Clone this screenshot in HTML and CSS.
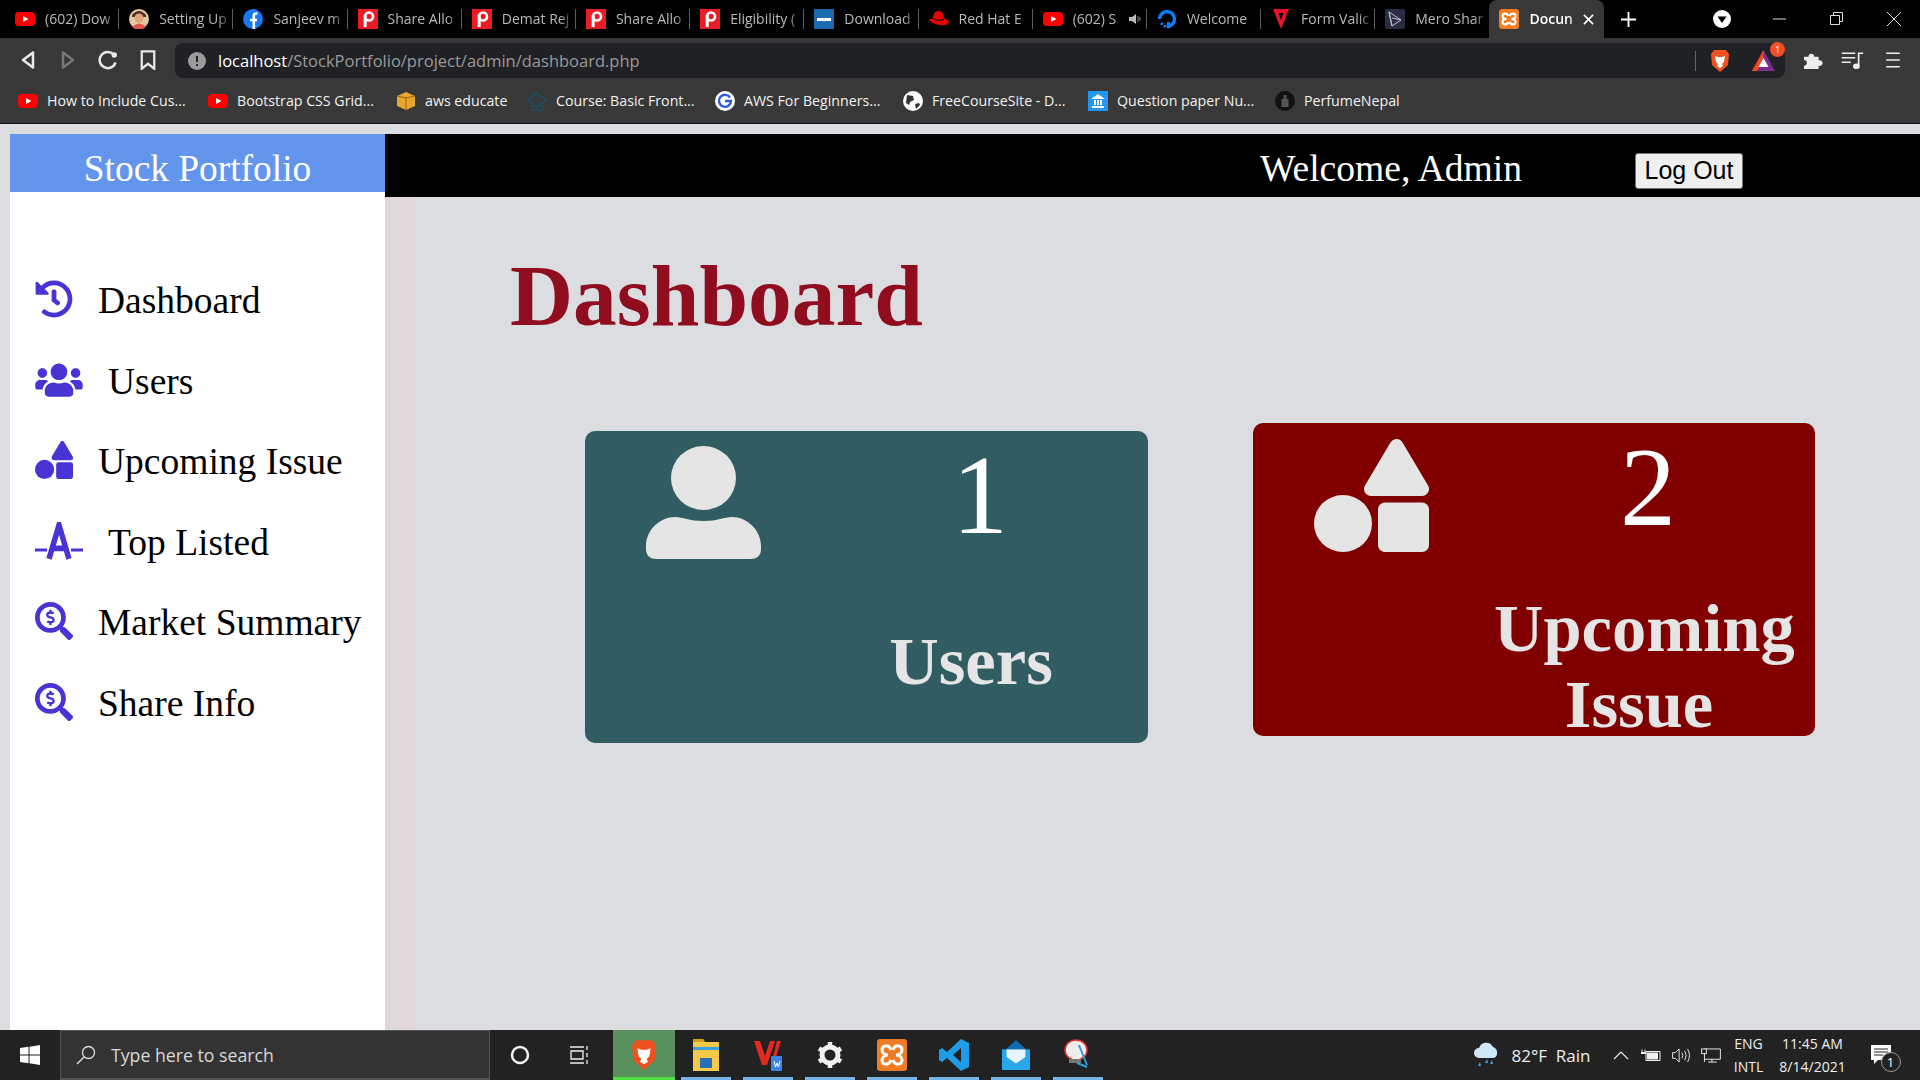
FILE: index.html
```html
<!DOCTYPE html>
<html lang="en">
<head>
<meta charset="utf-8">
<title>Document</title>
<link rel="stylesheet" href="styles.css">
</head>
<body>
<svg class="defs" aria-hidden="true">
  <defs>
    <symbol id="yt" viewBox="0 0 20 14"><rect width="20" height="14" rx="4" fill="#f00"/><path d="M8 4l5.5 3L8 10z" fill="#fff"/></symbol>
    <symbol id="pf" viewBox="0 0 20 20"><rect width="20" height="20" fill="#ed1c24"/><circle cx="11" cy="7.5" r="4" fill="none" stroke="#fff" stroke-width="2.6"/><path d="M7.2 6v12" stroke="#fff" stroke-width="3"/></symbol>
    <symbol id="fb" viewBox="0 0 20 20"><circle cx="10" cy="10" r="10" fill="#1877f2"/><path d="M7 11h7M14.5 4.500h-1.500c-1.500 0-2.200 1-2.200 2.500V20" fill="none" stroke="#fff" stroke-width="2.600"/></symbol>
    <symbol id="av" viewBox="0 0 20 20"><circle cx="10" cy="10" r="10" fill="#e9c8a0"/><path d="M3 6q7-8 14 0v2H3z" fill="#4a3326"/><circle cx="10" cy="9" r="4.500" fill="#e2a77c"/><path d="M3 18q7-7 14 0l-3 2H6z" fill="#e8554e"/></symbol>
    <symbol id="vm" viewBox="0 0 20 20"><rect width="20" height="20" fill="#1b6bb0"/><path d="M3 9h14v3H3z" fill="#fff"/></symbol>
    <symbol id="rh" viewBox="0 0 20 20"><path d="M6 3q3-2 7 0l2 6 5 3q0 5-9 4T0 10l3 0z" fill="#e00"/><path d="M3 9q6 4 12 1" stroke="#000" fill="none"/></symbol>
    <symbol id="do" viewBox="0 0 20 20"><path d="M10 17.500A7.500 7.500 0 1 0 2.500 10" fill="none" stroke="#0a7cff" stroke-width="3.500"/><path d="M10 13h3v3h-3zM6.500 16h3v2.500h-3zM3.500 13.500h2.500V16h-2.500z" fill="#0a7cff"/></symbol>
    <symbol id="fv" viewBox="0 0 20 20"><path d="M2 0h16l-8 20z" fill="#e8132b"/><path d="M7.500 4h5L10 11z" fill="#000"/></symbol>
    <symbol id="ms" viewBox="0 0 20 20"><rect width="20" height="20" rx="2" fill="#2a2c44"/><path d="M4 3l12 8-9 6zM4 3l3 14M7 9l9 2" fill="none" stroke="#bfc4d8" stroke-width="1"/></symbol>
    <symbol id="xa" viewBox="0 0 20 20"><rect width="20" height="20" rx="3" fill="#f47b20"/><path d="M9.500 7C8 3.500 3.500 4 3.500 7c0 2 2 3 4 3-2 0-4 1-4 3 0 3 4.500 3.500 6 0M10.500 7c1.500-3.500 6-3 6 0 0 2-2 3-4 3 2 0 4 1 4 3 0 3-4.500 3.500-6 0" fill="none" stroke="#fff" stroke-width="2.200"/></symbol>
    <symbol id="go" viewBox="0 0 20 20"><circle cx="10" cy="10" r="10" fill="#fff"/><path d="M15 6.500A6 6 0 1 0 16 10h-6" fill="none" stroke="#2a5bd7" stroke-width="2.400"/></symbol>
    <symbol id="gl" viewBox="0 0 20 20"><circle cx="10" cy="10" r="10" fill="#fff"/><path d="M4 4l6 1 1 4-4 2-1 3-3-2zM12 13l4-1 1 2-4 4z" fill="#333"/></symbol>
    <symbol id="bk" viewBox="0 0 20 20"><rect width="20" height="20" fill="#2196f3"/><path d="M3 8l7-5 7 5zM4 15h12v2H4zM6 9h2v5H6zM9 9h2v5H9zM12 9h2v5h-2z" fill="#fff"/></symbol>
    <symbol id="pn" viewBox="0 0 20 20"><circle cx="10" cy="10" r="10" fill="#111"/><rect x="6.500" y="8" width="7" height="8" fill="#555"/><rect x="8.500" y="4" width="3" height="4" fill="#555"/></symbol>
    <symbol id="aw" viewBox="0 0 20 20"><path d="M10 1l9 4v10l-9 4-9-4V5z" fill="#e9a52e"/><path d="M10 6v13M1 5l9 2 9-2" fill="none" stroke="#9a6a12" stroke-width="1"/></symbol>
    <symbol id="co" viewBox="0 0 20 20"><path d="M1 9l9-7 9 7-9 7zM5 14v5h10v-5" fill="none" stroke="#1f4d63" stroke-width="1.600"/></symbol>
    <symbol id="br" viewBox="0 0 20 24"><path d="M4 1h12l3 4-1 11-8 7-8-7L1 5z" fill="#f1511e"/><path d="M5 7l3 1h4l3-1-1 6-2 2 1 2-3 2-3-2 1-2-2-2z" fill="#fff"/></symbol>
    <symbol id="history" viewBox="0 0 512 512"><path d="M504 255.531c.253 136.64-111.18 248.372-247.82 248.468-59.015.042-113.223-20.53-155.822-54.911-11.077-8.94-11.905-25.541-1.839-35.607l11.267-11.267c8.609-8.609 22.353-9.551 31.891-1.984C173.062 425.135 212.781 440 256 440c101.705 0 184-82.311 184-184 0-101.705-82.311-184-184-184-48.814 0-93.149 18.969-126.068 49.932l50.754 50.754c10.08 10.08 2.941 27.314-11.313 27.314H24c-8.837 0-16-7.163-16-16V38.627c0-14.254 17.234-21.393 27.314-11.314l49.372 49.372C129.209 34.136 189.552 8 256 8c136.81 0 247.747 110.78 248 247.531zm-180.912 78.784l9.823-12.63c8.138-10.463 6.253-25.542-4.21-33.679L288 256.349V152c0-13.255-10.745-24-24-24h-16c-13.255 0-24 10.745-24 24v135.651l65.409 50.874c10.463 8.137 25.541 6.253 33.679-4.21z"/></symbol>
    <symbol id="users" viewBox="0 0 640 512"><path d="M96 224c35.3 0 64-28.7 64-64s-28.7-64-64-64-64 28.7-64 64 28.7 64 64 64zm448 0c35.3 0 64-28.7 64-64s-28.7-64-64-64-64 28.7-64 64 28.7 64 64 64zm32 32h-64c-17.6 0-33.5 7.1-45.1 18.6 40.3 22.1 68.9 62 75.1 109.4h66c17.7 0 32-14.3 32-32v-32c0-35.3-28.7-64-64-64zm-256 0c61.9 0 112-50.1 112-112S381.9 32 320 32 208 82.1 208 144s50.1 112 112 112zm76.8 32h-8.3c-20.8 10-43.9 16-68.5 16s-47.6-6-68.5-16h-8.3C179.6 288 128 339.6 128 403.2V432c0 26.5 21.5 48 48 48h288c26.5 0 48-21.5 48-48v-28.8c0-63.6-51.6-115.2-115.2-115.2zm-223.7-13.4C161.5 263.1 145.6 256 128 256H64c-35.3 0-64 28.7-64 64v32c0 17.7 14.3 32 32 32h65.9c6.3-47.4 34.9-87.3 75.2-109.4z"/></symbol>
    <symbol id="shapes" viewBox="0 0 115 113" preserveAspectRatio="none"><path d="M82.500 7L108 50H57z" stroke="currentColor" stroke-width="14" stroke-linejoin="round"/><ellipse cx="29" cy="84.500" rx="29" ry="28.500"/><rect x="64" y="63.500" width="51" height="49.500" rx="7"/></symbol>
    <symbol id="road" viewBox="0 0 48 36" preserveAspectRatio="none"><path d="M14 35L24 3l10 32M18 25h12" fill="none" stroke="currentColor" stroke-width="5.500"/><path d="M0 26.500h12M36 26.500h12" stroke="currentColor" stroke-width="3"/></symbol>
    <symbol id="dollar" viewBox="0 0 512 512"><path d="M505.04 442.66l-99.71-99.69c-4.5-4.5-10.6-7-17-7h-16.3c27.6-35.3 44-79.69 44-127.99C416.03 93.09 322.92 0 208.02 0S0 93.09 0 207.98s93.11 207.98 208.02 207.98c48.3 0 92.71-16.4 128.01-44v16.3c0 6.4 2.5 12.5 7 17l99.71 99.69c9.4 9.4 24.6 9.4 33.9 0l28.3-28.3c9.4-9.4 9.4-24.59.1-33.99zm-297.02-90.7c-79.54 0-144-64.34-144-143.98 0-79.53 64.35-143.98 144-143.98 79.54 0 144 64.34 144 143.98 0 79.53-64.35 143.98-144 143.98zm27.11-152.54l-45.01-13.5c-5.16-1.55-8.77-6.78-8.77-12.73 0-7.27 5.3-13.19 11.8-13.19h28.11c4.56 0 8.96 1.29 12.82 3.72 3.24 2.03 7.36 1.91 10.13-.73l11.75-11.21c3.53-3.37 3.33-9.21-.57-12.14-9.1-6.83-20.08-10.77-31.37-11.35V112c0-4.42-3.58-8-8-8h-16c-4.42 0-8 3.58-8 8v16.12c-23.63.63-42.68 20.55-42.68 45.07 0 19.97 12.99 37.81 31.58 43.39l45.01 13.5c5.16 1.55 8.77 6.78 8.77 12.73 0 7.27-5.3 13.19-11.8 13.19h-28.1c-4.56 0-8.96-1.29-12.82-3.72-3.24-2.03-7.36-1.91-10.13.73l-11.75 11.21c-3.53 3.37-3.33 9.21.57 12.14 9.1 6.83 20.08 10.77 31.37 11.35V304c0 4.42 3.58 8 8 8h16c4.42 0 8-3.58 8-8v-16.12c23.63-.63 42.68-20.54 42.68-45.07 0-19.97-12.98-37.81-31.58-43.39z"/></symbol>
  </defs>
</svg>

<header class="chrome">
  <div class="tabs">
    <div class="tab"><svg class="fav yt"><use href="#yt"/></svg><span class="tab-title">(602) Dow</span></div>
    <div class="tab"><svg class="fav"><use href="#av"/></svg><span class="tab-title">Setting Up</span></div>
    <div class="tab"><svg class="fav"><use href="#fb"/></svg><span class="tab-title">Sanjeev m</span></div>
    <div class="tab"><svg class="fav"><use href="#pf"/></svg><span class="tab-title">Share Allo</span></div>
    <div class="tab"><svg class="fav"><use href="#pf"/></svg><span class="tab-title">Demat Rej</span></div>
    <div class="tab"><svg class="fav"><use href="#pf"/></svg><span class="tab-title">Share Allo</span></div>
    <div class="tab"><svg class="fav"><use href="#pf"/></svg><span class="tab-title">Eligibility (</span></div>
    <div class="tab"><svg class="fav"><use href="#vm"/></svg><span class="tab-title">Download</span></div>
    <div class="tab"><svg class="fav"><use href="#rh"/></svg><span class="tab-title">Red Hat E</span></div>
    <div class="tab"><svg class="fav yt"><use href="#yt"/></svg><span class="tab-title">(602) S</span><svg class="tab-sound" viewBox="0 0 12 12"><path d="M0 4h3l4-3v10L3 8H0z" fill="#bbb"/><path d="M9 3v6M11 4v4" stroke="#888"/></svg></div>
    <div class="tab"><svg class="fav"><use href="#do"/></svg><span class="tab-title">Welcome</span></div>
    <div class="tab"><svg class="fav"><use href="#fv"/></svg><span class="tab-title">Form Valic</span></div>
    <div class="tab tab-last"><svg class="fav"><use href="#ms"/></svg><span class="tab-title">Mero Shar</span></div>
    <div class="tab tab-active"><svg class="fav"><use href="#xa"/></svg><span class="tab-title">Docun</span><svg class="tab-close" viewBox="0 0 12 12"><path d="M1 1l10 10M11 1L1 11" stroke="#fff" stroke-width="1.800"/></svg></div>
    <svg class="new-tab" viewBox="0 0 16 16"><path d="M8 0v16M0 8h16" stroke="#fff" stroke-width="2"/></svg>
    <div class="win-controls">
      <svg class="win-drop" viewBox="0 0 18 18"><circle cx="9" cy="9" r="9" fill="#fff"/><path d="M4.500 6.500h9L9 13z" fill="#000"/></svg>
      <svg class="win-btn" viewBox="0 0 14 14"><path d="M0 7h13" stroke="#ddd"/></svg>
      <svg class="win-btn" viewBox="0 0 14 14"><path d="M.5 3.500h9v9h-9zM3.500 3.500v-3h9v9h-3" fill="none" stroke="#ddd"/></svg>
      <svg class="win-btn" viewBox="0 0 14 14"><path d="M0 0l14 14M14 0L0 14" stroke="#ddd"/></svg>
    </div>
  </div>

  <div class="toolbar">
    <div class="nav-btns">
      <svg class="nav-btn" viewBox="0 0 14 16"><path d="M11 2L3 8l8 6z" fill="none" stroke="#e8e8e8" stroke-width="2" stroke-linejoin="round"/></svg>
      <svg class="nav-btn" viewBox="0 0 14 16"><path d="M3 2l8 6-8 6z" fill="none" stroke="#777" stroke-width="2" stroke-linejoin="round"/></svg>
      <svg class="nav-btn" viewBox="0 0 16 16"><path d="M14 10a6.500 6.500 0 1 1-1.500-6.500" fill="none" stroke="#e8e8e8" stroke-width="2"/><circle cx="13" cy="4" r="2.200" fill="#e8e8e8"/></svg>
      <svg class="nav-btn" viewBox="0 0 14 16"><path d="M2 1h10v14l-5-4-5 4z" fill="none" stroke="#e8e8e8" stroke-width="1.800"/></svg>
    </div>
    <div class="omnibox">
      <svg class="info" viewBox="0 0 18 18"><circle cx="9" cy="9" r="9" fill="#9b9b9b"/><path d="M9 4v6M9 12v2" stroke="#202124" stroke-width="2"/></svg>
      <span class="url"><span class="url-host">localhost</span>/StockPortfolio/project/admin/dashboard.php</span>
      <span class="omni-sep"></span>
      <svg class="brave"><use href="#br"/></svg>
      <span class="bat">
        <svg class="bat-tri" viewBox="0 0 23 21"><path d="M11.500 0L23 21H0z" fill="#7b2d8e"/><path d="M11.500 0L0 21h5l6.500-12z" fill="#f0481f"/><path d="M11.500 8L16.500 17h-10z" fill="#fff"/></svg>
        <span class="bat-badge">1</span>
      </span>
    </div>
    <div class="tool-right">
      <svg class="tool-btn" viewBox="0 0 18 16"><path d="M1 5h4a2.500 2.500 0 1 1 5 0h4v3.500a2.500 2.500 0 1 1 0 4.500V16H1v-3a2.500 2.500 0 1 0 0-5z" fill="#eee"/></svg>
      <svg class="tool-btn" viewBox="0 0 20 16"><path d="M0 2h12M0 6h12M0 10h8" stroke="#eee" stroke-width="1.500"/><path d="M15 13V2h4" fill="none" stroke="#eee" stroke-width="1.500"/><ellipse cx="13" cy="13.500" rx="3" ry="2.500" fill="#eee"/></svg>
      <svg class="tool-btn" viewBox="0 0 14 16"><path d="M1 2h12M1 8h12M1 14h12" stroke="#eee" stroke-width="1.500"/></svg>
    </div>
  </div>

  <div class="bookmarks">
    <div class="bm"><svg class="bm-icon"><use href="#yt"/></svg><span>How to Include Cus...</span></div>
    <div class="bm"><svg class="bm-icon"><use href="#yt"/></svg><span>Bootstrap CSS Grid...</span></div>
    <div class="bm"><svg class="bm-icon"><use href="#aw"/></svg><span>aws educate</span></div>
    <div class="bm"><svg class="bm-icon"><use href="#co"/></svg><span>Course: Basic Front...</span></div>
    <div class="bm"><svg class="bm-icon"><use href="#go"/></svg><span>AWS For Beginners...</span></div>
    <div class="bm"><svg class="bm-icon"><use href="#gl"/></svg><span>FreeCourseSite - D...</span></div>
    <div class="bm"><svg class="bm-icon"><use href="#bk"/></svg><span>Question paper Nu...</span></div>
    <div class="bm"><svg class="bm-icon"><use href="#pn"/></svg><span>PerfumeNepal</span></div>
  </div>
</header>

<div class="app">
  <aside class="sidebar">
    <div class="brand">Stock Portfolio</div>
    <nav class="side-nav">
      <a class="side-item"><svg class="side-icon"><use href="#history"/></svg><span class="side-text">Dashboard</span></a>
      <a class="side-item"><svg class="side-icon side-icon-wide"><use href="#users"/></svg><span class="side-text">Users</span></a>
      <a class="side-item"><svg class="side-icon"><use href="#shapes"/></svg><span class="side-text">Upcoming Issue</span></a>
      <a class="side-item"><svg class="side-icon side-icon-wide"><use href="#road"/></svg><span class="side-text">Top Listed</span></a>
      <a class="side-item"><svg class="side-icon"><use href="#dollar"/></svg><span class="side-text">Market Summary</span></a>
      <a class="side-item"><svg class="side-icon"><use href="#dollar"/></svg><span class="side-text">Share Info</span></a>
    </nav>
  </aside>

  <main class="main">
    <div class="topbar">
      <span class="welcome">Welcome, Admin</span>
      <button class="logout" type="button">Log Out</button>
    </div>
    <div class="content">
      <div class="strip"></div>
      <div class="panel">
        <h1 class="title">Dashboard</h1>
        <div class="cards">
          <section class="card card-users">
            <svg class="card-icon" viewBox="0 0 115 113"><ellipse cx="57.500" cy="32" rx="32.500" ry="32"/><path d="M11 113h93q11 0 11-10v-3c0-16-14-29-29-29-8 0-14 4-28.500 4S37 71 29 71C14 71 0 84 0 100v3q0 10 11 10z"/></svg>
            <div class="card-text">
              <div class="card-num">1</div>
              <div class="card-label">Users</div>
            </div>
          </section>
          <section class="card card-issue">
            <svg class="card-icon"><use href="#shapes"/></svg>
            <div class="card-text">
              <div class="card-num">2</div>
              <div class="card-label">Upcoming Issue</div>
            </div>
          </section>
        </div>
      </div>
    </div>
  </main>
</div>

<footer class="taskbar">
  <div class="start"><svg class="start-logo" viewBox="0 0 20 20"><path d="M0 3l8.500-1.200v7.700H0zM9.500 1.700L20 0v9.500H9.500zM0 10.500h8.500v7.700L0 17zM9.500 10.500H20V20L9.500 18.300z" fill="#fff"/></svg></div>
  <div class="search">
    <svg class="search-icon" viewBox="0 0 20 20"><circle cx="12.500" cy="7.500" r="6" fill="none" stroke="#ddd" stroke-width="1.300"/><path d="M8 12l-7 7" stroke="#ddd" stroke-width="1.500"/></svg>
    <span class="search-text">Type here to search</span>
  </div>
  <div class="tb-slot"><svg class="tb-sys" viewBox="0 0 20 20"><circle cx="10" cy="10" r="8" fill="none" stroke="#eee" stroke-width="2.500"/></svg></div>
  <div class="tb-slot"><svg class="tb-sys" viewBox="0 0 20 20"><path d="M0 2h14M0 18h14M1 6h12v8H1zM17 1v4M17 8v4M17 15v4" fill="none" stroke="#eee" stroke-width="1.300"/></svg></div>
  <div class="tb-apps">
    <div class="tb-app tb-app-active"><svg class="tb-icon"><use href="#br"/></svg><i class="tb-mark tb-mark-green"></i></div>
    <div class="tb-app"><svg class="tb-icon" viewBox="0 0 30 32"><path d="M2 0h10l2 3h14v29H2z" fill="#f7c948"/><path d="M2 0h10l2 3H2z" fill="#d69a1e"/><path d="M2 8h26v3H2z" fill="#3aa0e0"/><path d="M9 19h12v10H9z" fill="#2a6db8"/></svg><i class="tb-mark"></i></div>
    <div class="tb-app"><svg class="tb-icon" viewBox="0 0 30 32"><path d="M1 2l8 24h5l8-24h-5l-5 15L7 2z" fill="#e32a1e"/><path d="M24 2l-4 16h3l5-16z" fill="#e32a1e"/><rect x="18" y="17" width="11" height="15" rx="1" fill="#3a86e0"/><path d="M21 22l1.500 6 1.500-4 1.500 4 1.500-6" fill="none" stroke="#fff"/></svg><i class="tb-mark"></i></div>
    <div class="tb-app"><svg class="tb-icon" viewBox="0 0 30 32"><circle cx="15" cy="16" r="8" fill="none" stroke="#f0f0f0" stroke-width="5"/><path d="M15 3v5M15 24v5M4 9.500l4 2.500M22 20l4 2.500M4 22.500l4-2.500M22 12l4-2.500" stroke="#f0f0f0" stroke-width="4.500"/></svg><i class="tb-mark"></i></div>
    <div class="tb-app"><svg class="tb-icon" viewBox="0 0 30 32"><rect width="30" height="32" rx="3" fill="#ee7c26"/><path d="M14 11C12 5 5 6 5 11c0 3 3 5 6 5-3 0-6 2-6 5 0 5 7 6 9 0M16 11c2-6 9-5 9 0 0 3-3 5-6 5 3 0 6 2 6 5 0 5-7 6-9 0" fill="none" stroke="#fff" stroke-width="3"/></svg><i class="tb-mark"></i></div>
    <div class="tb-app"><svg class="tb-icon" viewBox="0 0 30 32"><path d="M22 0l8 4v24l-8 4-14-13-5 4-3-2V11l3-2 5 4zM22 9l-8 7 8 7z" fill="#1f9ce8"/></svg><i class="tb-mark"></i></div>
    <div class="tb-app"><svg class="tb-icon" viewBox="0 0 32 32"><path d="M16 0l11 10H5z" fill="#0e6bb5"/><path d="M1 10h30v22H1z" fill="#28a8ea"/><path d="M6 10h20v8l-10 7-10-7z" fill="#e8f4fc"/></svg><i class="tb-mark"></i></div>
    <div class="tb-app"><svg class="tb-icon" viewBox="0 0 30 32"><ellipse cx="13" cy="11" rx="11" ry="10" fill="#eee" stroke="#d33" stroke-width="1.500"/><path d="M6 20h12v4H6z" fill="#777"/><path d="M16 6l8 20M14 24l10 4" fill="none" stroke="#2aa0d8" stroke-width="2"/></svg><i class="tb-mark"></i></div>
  </div>
  <div class="tray">
    <svg class="tray-cloud" viewBox="0 0 27 26"><path d="M6 16a5 5 0 0 1 0-10 7.500 7.500 0 0 1 14-1 6 6 0 0 1 1 11z" fill="#cfe6f7"/><path d="M7 20l-2 4h3zM14 17l-2 4h3zM19 18l-2 4h3z" fill="#4a9fe0"/></svg>
    <span class="tray-weather">82°F&nbsp; Rain</span>
    <svg class="tray-chev" viewBox="0 0 16 10"><path d="M1 9l7-7 7 7" fill="none" stroke="#eee" stroke-width="1.200"/></svg>
    <svg class="tray-ico" viewBox="0 0 20 14"><path d="M5 3h14v9H5z" fill="none" stroke="#eee"/><path d="M6 4h11v7H6z" fill="#eee"/><path d="M1 1v3M4 1v3M0 4h5v1H0z" stroke="#eee"/></svg>
    <svg class="tray-ico" viewBox="0 0 20 16"><path d="M1 5h3l4-4v14l-4-4H1z" fill="none" stroke="#eee"/><path d="M11 5q2 3 0 6M14 3q3 5 0 10M17 1q4 7 0 14" fill="none" stroke="#eee"/></svg>
    <svg class="tray-ico" viewBox="0 0 20 16"><path d="M3 1h17v11H3M11 12v3M7 15h9M3 1v14" fill="none" stroke="#eee"/><rect x="0" y="1" width="5" height="5" fill="#222" stroke="#eee"/></svg>
    <div class="tray-lang"><span>ENG</span><span>INTL</span></div>
    <div class="tray-clock"><span>11:45 AM</span><span>8/14/2021</span></div>
    <div class="tray-notif">
      <svg class="notif-ico" viewBox="0 0 20 20"><path d="M0 0h20v15H7l-4 4v-4H0z" fill="#fff"/><path d="M3 4h14M3 7h14M3 10h9" stroke="#222"/></svg>
      <span class="notif-badge">1</span>
    </div>
  </div>
</footer>
</body>
</html>
```

FILE: styles.css
```css
* { box-sizing: border-box; }
html, body { margin: 0; padding: 0; }
body {
  width: 1920px;
  height: 1080px;
  overflow: hidden;
  display: flex;
  flex-direction: column;
  background: #dcdde1;
  font-family: "Liberation Serif", serif;
}
.defs { width: 0; height: 0; position: absolute; }

/* browser chrome */
.chrome {
  height: 124px;
  flex: none;
  background: #383838;
  border-bottom: 1px solid #111;
  font-family: "Open Sans", "Noto Sans", sans-serif;
  color: #fff;
}
.tabs {
  height: 38px;
  background: #000;
  display: flex;
  align-items: center;
  padding-left: 5px;
}
.tab {
  width: 114.200px;
  height: 20px;
  margin-top: -1px;
  display: flex;
  align-items: center;
  gap: 10px;
  padding-left: 10px;
  border-right: 1px solid #5c5c5c;
  flex: none;
}
.tab-last { border-right: none; }
.tab-active {
  height: 38px;
  margin-top: 0;
  background: #383838;
  border-right: none;
  border-radius: 8px 8px 0 0;
}
.fav { width: 20px; height: 20px; flex: none; }
.tab-title {
  flex: 1;
  min-width: 0;
  white-space: nowrap;
  font-size: 14px;
  line-height: 18px;
  color: #b9b9b9;
  -webkit-mask-image: linear-gradient(to right, #000 80%, transparent 100%);
  mask-image: linear-gradient(to right, #000 80%, transparent 100%);
}
.tab-active .tab-title { color: #fff; font-weight: 600; }
.tab-sound { width: 12px; height: 12px; flex: none; margin-right: 5px; margin-left: -6px; }
.tab-close { width: 11px; height: 11px; flex: none; margin-right: 10px; margin-left: -6px; }
.new-tab { width: 15px; height: 15px; margin-left: 17px; flex: none; }
.win-controls {
  flex: 1;
  display: flex;
  align-items: center;
  padding-left: 77px;
  gap: 43px;
}
.win-drop { width: 18px; height: 18px; margin-right: -1px; }
.win-btn { width: 14px; height: 14px; }

.toolbar {
  height: 40px;
  display: flex;
  padding-top: 5px;
  padding-left: 8px;
}
.nav-btns { display: flex; width: 167px; flex: none; }
.nav-btn { width: 40px; height: 20px; margin-top: 7px; }
.omnibox {
  width: 1610px;
  height: 35px;
  flex: none;
  background: #202124;
  border-radius: 8px;
  display: flex;
  align-items: center;
  padding: 0 10px 0 13px;
}
.info { width: 18px; height: 18px; flex: none; }
.url {
  margin-left: 12px;
  flex: 1;
  font-size: 16.500px;
  color: #9a9a9a;
  white-space: nowrap;
}
.url-host { color: #fff; }
.omni-sep { width: 1px; height: 20px; background: #666; flex: none; }
.brave { width: 20px; height: 24px; margin-left: 14px; flex: none; }
.bat { display: flex; position: relative; margin-left: 22px; flex: none; }
.bat-tri { width: 23px; height: 21px; }
.bat-badge {
  position: absolute;
  top: -8px;
  right: -10px;
  width: 15px;
  height: 15px;
  border-radius: 50%;
  background: #f0502a;
  font-size: 9px;
  line-height: 15px;
  text-align: center;
  color: #fff;
}
.tool-right { display: flex; padding-left: 8px; }
.tool-btn { width: 40px; height: 18px; margin-top: 8px; }

.bookmarks {
  height: 45px;
  padding-left: 18px;
  display: grid;
  grid-template-columns: 190px 188px 131px 188px 188px 185px 187px 1fr;
  align-items: center;
}
.bm {
  display: flex;
  align-items: center;
  gap: 9px;
  font-size: 14.200px;
  color: #f2f2f2;
  white-space: nowrap;
}
.bm-icon { width: 20px; height: 20px; flex: none; }

/* app */
.app {
  flex: 1;
  min-height: 0;
  display: flex;
  padding: 10px 0 0 10px;
  background: #dcdde1;
}
.sidebar { width: 375px; flex: none; background: #fff; }
.brand {
  height: 58px;
  padding-top: 11px;
  line-height: 47px;
  background: #6495ed;
  color: #fff;
  font-size: 37.400px;
  text-align: center;
}
.side-nav { padding: 67px 0 0 25px; }
.side-item {
  height: 80.500px;
  display: flex;
  align-items: center;
  gap: 25px;
  color: #000;
}
.side-icon { width: 38px; height: 38px; flex: none; fill: #4834d4; color: #4834d4; }
.side-icon-wide { width: 48px; }
.side-text { font-size: 37.500px; line-height: 42px; padding-top: 4px; }

.main { flex: 1; min-width: 0; display: flex; flex-direction: column; }
.topbar {
  height: 63px;
  flex: none;
  background: #000;
  display: flex;
  align-items: center;
  padding-left: 875px;
}
.welcome { width: 375px; flex: none; color: #fff; font-size: 37.600px; padding-top: 5px; }
.logout {
  width: 108px;
  height: 36px;
  padding: 0;
  margin-top: 10px;
  background: #efefef;
  border: 1px solid #767676;
  border-radius: 3px;
  font-family: "Liberation Sans", sans-serif;
  font-size: 25px;
  color: #000;
}
.content { flex: 1; min-height: 0; display: flex; }
.strip { width: 31px; flex: none; background: #e0d8da; }
.panel { flex: 1; min-width: 0; padding-top: 55px; }
.title {
  margin: 0 0 83px 94px;
  font-size: 87.400px;
  line-height: 88px;
  font-weight: 700;
  color: #900c1f;
}
.cards { display: flex; align-items: flex-start; gap: 105px; padding-left: 169px; }
.card {
  flex: none;
  border-radius: 10px;
  display: flex;
  padding: 8px 0 0 61px;
  color: #e5e5e5;
}
.card-users { background: #315c62; margin-top: 8px; width: 563px; height: 312px; }
.card-issue { background: #800000; width: 562px; height: 313px; }
.card-icon { width: 115px; height: 113px; flex: none; margin-top: 7px; margin-right: 61px; fill: #e5e5e5; color: #e5e5e5; }
.card-issue .card-icon { margin-top: 8px; }
.card-text { width: 298px; flex: none; text-align: center; }
.card-num {
  font-size: 112px;
  line-height: 112px;
  color: #fff;
  padding-left: 18px;
}
.card-label { font-size: 68.500px; line-height: 76px; font-weight: 700; }
.card-users .card-label { margin-top: 72px; }
.card-issue .card-label { margin-top: 47px; text-indent: 4px; }

/* taskbar */
.taskbar {
  height: 50px;
  flex: none;
  background: #222;
  display: flex;
  font-family: "Open Sans", "Noto Sans", sans-serif;
  color: #eee;
}
.start { width: 60px; flex: none; display: flex; align-items: center; justify-content: center; }
.start-logo { width: 20px; height: 20px; }
.search {
  width: 430px;
  flex: none;
  background: #333;
  border: 1px solid #555;
  border-bottom-width: 2px;
  display: flex;
  align-items: center;
  padding-left: 15px;
  gap: 15px;
}
.search-icon { width: 20px; height: 20px; flex: none; }
.search-text { font-size: 17.700px; color: #d8d8d8; }
.tb-slot { width: 60px; flex: none; display: flex; align-items: center; justify-content: center; }
.tb-sys { width: 20px; height: 20px; }
.tb-apps { display: flex; margin-left: 3px; }
.tb-app {
  width: 62px;
  display: flex;
  flex-direction: column;
  align-items: center;
  padding-top: 9px;
}
.tb-app-active { background: #5a8f5e; }
.tb-icon { width: 30px; height: 32px; flex: none; }
.tb-mark { width: 50px; height: 3px; margin-top: auto; background: #76b4e8; display: block; }
.tb-app-active .tb-mark { width: 100%; }
.tb-mark-green { background: #4be03c; }

.tray { flex: 1; display: flex; align-items: center; padding-left: 363.500px; }
.tray-cloud { width: 27px; height: 26px; flex: none; }
.tray-weather { font-size: 17px; margin-left: 12px; width: 101px; flex: none; white-space: nowrap; }
.tray-chev { width: 16px; height: 10px; flex: none; }
.tray-ico { width: 20px; height: 15px; flex: none; margin-left: 10px; }
.tray-chev + .tray-ico { margin-left: 12px; }
.tray-lang, .tray-clock {
  display: flex;
  flex-direction: column;
  align-items: center;
  font-size: 14px;
  line-height: 23px;
  flex: none;
  white-space: nowrap;
}
.tray-lang { margin-left: 13px; width: 30px; }
.tray-clock { margin-left: 15px; width: 68px; }
.tray-notif { position: relative; margin-left: 24px; width: 20px; height: 20px; flex: none; }
.notif-ico { width: 20px; height: 20px; }
.notif-badge {
  position: absolute;
  left: 10px;
  top: 7px;
  width: 20px;
  height: 20px;
  border: 1px solid #999;
  border-radius: 50%;
  background: #222;
  font-size: 13px;
  line-height: 18px;
  text-align: center;
  color: #fff;
}
```
